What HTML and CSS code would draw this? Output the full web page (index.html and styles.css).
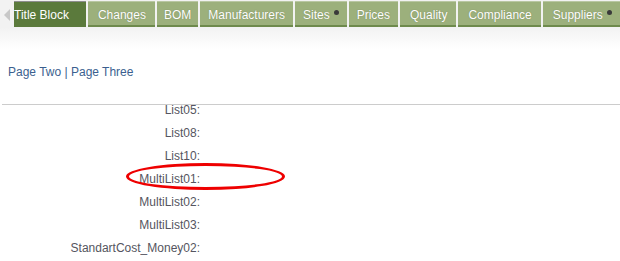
FILE: index.html
```html
<!DOCTYPE html>
<html>
<head>
<meta charset="utf-8">
<link rel="stylesheet" href="styles.css">
</head>
<body>
<div class="tabbar">
  <div class="scroll-left"><svg width="8" height="14" viewBox="0 0 8 14"><path d="M7 1 L1 7 L7 13 Z" fill="#c8c8c8"/></svg></div>
  <div class="tab active">Title Block</div>
  <div class="tab wide">Changes</div>
  <div class="tab narrow">BOM</div>
  <div class="tab">Manufacturers</div>
  <div class="tab">Sites<span class="dot"></span></div>
  <div class="tab">Prices</div>
  <div class="tab wide">Quality</div>
  <div class="tab wide">Compliance</div>
  <div class="tab last">Suppliers<span class="dot"></span></div>
</div>
<div class="fade"></div>
<div class="links"><a href="#">Page Two</a> | <a href="#">Page Three</a></div>
<div class="rule"></div>
<div class="fields">
  <div class="list">
    <div class="row">List05:</div>
    <div class="row">List08:</div>
    <div class="row">List10:</div>
    <div class="row">MultiList01:</div>
    <div class="row">MultiList02:</div>
    <div class="row">MultiList03:</div>
    <div class="row">StandartCost_Money02:</div>
  </div>
  <div class="circle"></div>
</div>
</body>
</html>
```
FILE: styles.css
```css
html, body {
  margin: 0;
  padding: 0;
  background: #ffffff;
  font-family: "Liberation Sans", Arial, sans-serif;
  width: 620px;
  height: 261px;
  overflow: hidden;
}
.tabbar {
  display: flex;
  height: 26px;
  padding-top: 1px;
  background: #f2f2f2;
  white-space: nowrap;
  overflow: hidden;
}
.scroll-left {
  width: 14px;
  flex: none;
  display: flex;
  align-items: center;
  justify-content: center;
  padding-top: 2px;
  box-sizing: border-box;
}
.tab {
  flex: none;
  display: flex;
  align-items: center;
  padding: 2px 8px 0 8px;
  margin-right: 2px;
  background: #9cb07c;
  border-top: 1px solid #b9c7a2;
  border-bottom: 2px solid #6e8a4c;
  color: #ffffff;
  font-size: 12px;
  text-shadow: 0 0 1px #6f7f55;
  box-sizing: border-box;
  height: 26px;
}
.tab.wide {
  padding: 2px 9px 0 10px;
}
.tab.narrow {
  padding: 2px 7px 0 7px;
}
.tab.last {
  padding: 2px 20px 0 10px;
}
.tab.active {
  background: #5b7a3c;
  border-top: 1px solid #8e8e8e;
  border-bottom: 2px solid #5b7a3c;
  padding: 2px 17px 0 0;
  text-shadow: none;
}
.dot {
  display: inline-block;
  width: 5px;
  height: 5px;
  border-radius: 50%;
  background: #3a3a3a;
  margin-left: 4px;
  margin-top: -5px;
}
.fade {
  height: 22px;
  background: linear-gradient(#f2f2f2, #ffffff);
}
.links {
  padding: 16px 0 0 8px;
  height: 22px;
  font-size: 12px;
  color: #3b5f8f;
}
.links a {
  color: #3b5f8f;
  text-decoration: none;
}
.rule {
  margin: 17px 0 0 2px;
  border-top: 1px solid #cccccc;
}
.fields {
  position: relative;
  height: 156px;
  overflow: hidden;
}
.list {
  margin-top: -6px;
  width: 200px;
}
.row {
  height: 23px;
  line-height: 23px;
  text-align: right;
  font-size: 12px;
  color: #555560;
}
.circle {
  position: absolute;
  left: 126px;
  top: 58px;
  width: 153px;
  height: 21px;
  border: 3px solid #ee0000;
  border-radius: 50%;
}
```
